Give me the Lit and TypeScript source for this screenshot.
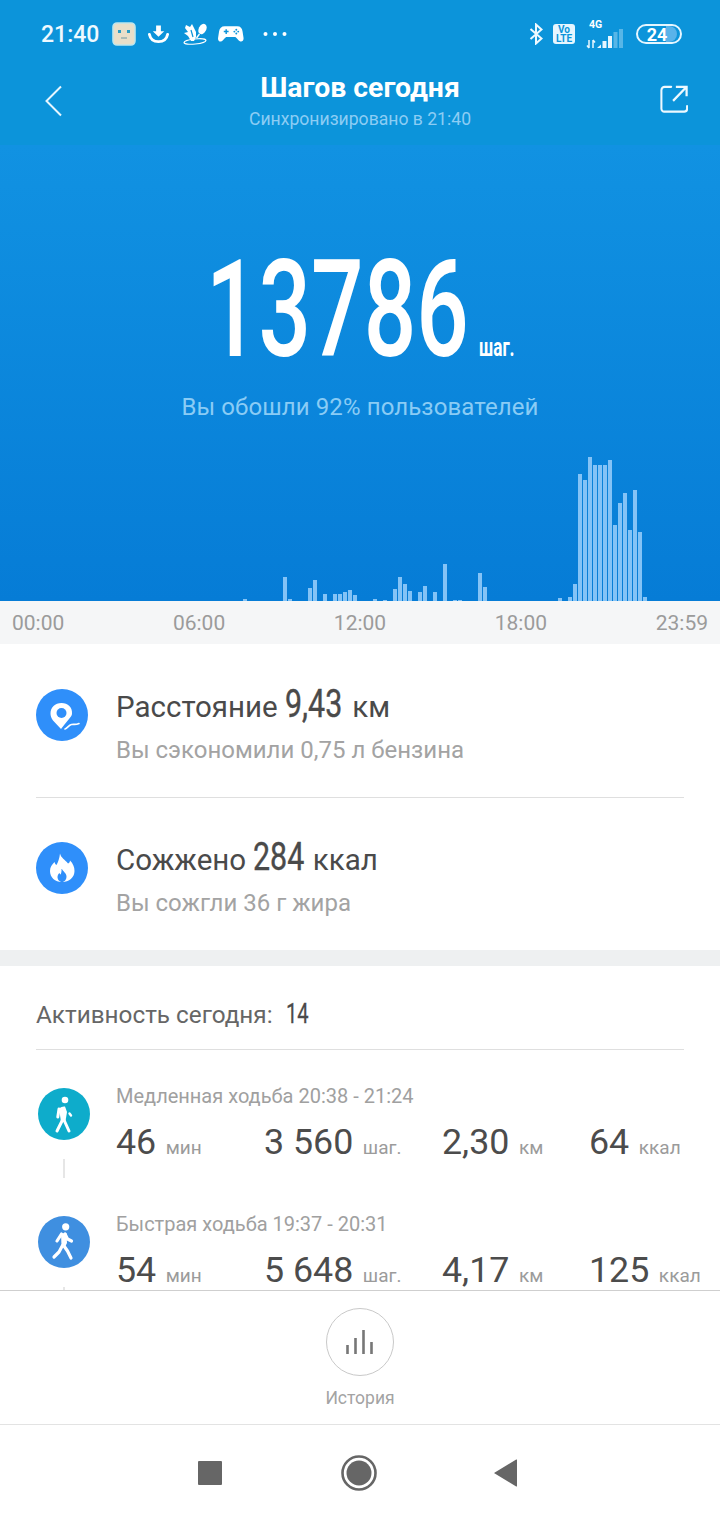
import { LitElement, css, html, svg } from "lit";
import { customElement } from "lit/decorators.js";

// Ten-minute step buckets starting at 00:00, keyed by slot index.
const STEP_SLOTS: Record<number, number> = {
  48: 2, 56: 24, 57: 2, 61: 13, 62: 21, 64: 7, 66: 7, 67: 7, 68: 9, 69: 11, 70: 6,
  74: 2, 76: 1, 78: 12, 79: 24, 80: 17, 81: 10, 83: 9, 84: 15, 86: 9, 88: 37,
  90: 1, 91: 1, 95: 28, 96: 14, 111: 3, 113: 4, 114: 17, 115: 127, 116: 121,
  117: 144, 118: 136, 119: 136, 120: 136, 121: 141, 122: 76, 123: 98, 124: 108,
  125: 71, 126: 111, 127: 69, 128: 4,
};

const AXIS = ["00:00", "06:00", "12:00", "18:00", "23:59"];

interface Stat {
  value: string;
  unit: string;
}

interface Activity {
  title: string;
  color: string;
  fast: boolean;
  stats: Stat[];
}

const ACTIVITIES: Activity[] = [
  {
    title: "Медленная ходьба 20:38 - 21:24",
    color: "#0eaccb",
    fast: false,
    stats: [
      { value: "46", unit: "мин" },
      { value: "3 560", unit: "шаг." },
      { value: "2,30", unit: "км" },
      { value: "64", unit: "ккал" },
    ],
  },
  {
    title: "Быстрая ходьба 19:37 - 20:31",
    color: "#3f8fe0",
    fast: true,
    stats: [
      { value: "54", unit: "мин" },
      { value: "5 648", unit: "шаг." },
      { value: "4,17", unit: "км" },
      { value: "125", unit: "ккал" },
    ],
  },
];

const slowWalker = svg`
  <circle cx="27" cy="12" r="3.300" fill="#fff" />
  <path d="M21 20.500Q24 18 27 18.500L29 24 27.500 33 23 34Z" fill="#fff" />
  <path d="M21 21 19.800 29" stroke="#fff" stroke-width="3" fill="none" stroke-linecap="round" />
  <path d="M31.500 25.500 33 27.500" stroke="#fff" stroke-width="2.400" fill="none" stroke-linecap="round" />
  <path d="M24.500 32 19 43M26 32 31 43" stroke="#fff" stroke-width="3" fill="none" stroke-linecap="round" />
`;

const fastWalker = svg`
  <circle cx="27.700" cy="10.800" r="3.600" fill="#fff" />
  <path d="M23.500 18 19 25M27 18 29.500 23 33.500 25" stroke="#fff" stroke-width="3.200" fill="none" stroke-linecap="round" stroke-linejoin="round" />
  <path d="M23 17.500 28.500 17 29 27 27 31 23.500 30Z" fill="#fff" />
  <path d="M24.500 29.500 21 36 16 41M26 30 29.500 35 33 42" stroke="#fff" stroke-width="3.200" fill="none" stroke-linecap="round" stroke-linejoin="round" />
`;

@customElement("app-root")
export class AppRoot extends LitElement {
  static styles = css`
    :host {
      display: block;
      width: 720px;
      height: 1520px;
      overflow: hidden;
      background: #fff;
      font-family: Roboto, "Noto Sans", sans-serif;
      color: #444;
    }
    svg {
      display: block;
      flex: none;
    }
    .page {
      display: flex;
      flex-direction: column;
      height: 1520px;
    }

    /* top bar */
    .top {
      height: 145px;
      flex: none;
      background: #0c94da;
      color: #fff;
    }
    .status {
      display: flex;
      align-items: center;
      height: 68px;
      padding: 0 38px 0 41px;
    }
    .time {
      font-size: 23px;
      font-weight: 500;
      width: 71px;
      color: #eef9ff;
    }
    .status-left {
      display: flex;
      align-items: center;
      gap: 12px;
    }
    .status-right {
      display: flex;
      align-items: center;
      margin-left: auto;
      gap: 9px;
    }
    .volte {
      display: flex;
      flex-direction: column;
      align-items: center;
      justify-content: center;
      width: 22px;
      height: 20px;
      border-radius: 3px;
      background: #e6f6ff;
      color: #0c94da;
      font-size: 10px;
      line-height: 9.500px;
      font-weight: 700;
    }
    .net {
      display: flex;
      flex-direction: column;
      align-items: center;
      margin-left: 1px;
      width: 40px;
    }
    .net b {
      font-size: 10.500px;
      line-height: 9px;
      margin-right: 19px;
    }
    .battery {
      display: flex;
      align-items: center;
      justify-content: center;
      position: relative;
      box-sizing: border-box;
      width: 46px;
      height: 20px;
      margin-left: 2px;
      border: 2px solid #e6f6ff;
      border-radius: 10px;
      font-size: 18px;
      font-weight: 700;
      overflow: hidden;
    }
    .battery i {
      position: absolute;
      top: 0;
      bottom: 0;
      right: 3px;
      width: 11px;
      border-radius: 0 8px 8px 0;
      background: #5ab3ea;
    }
    .battery span {
      position: relative;
      margin-right: 4px;
    }
    .title-row {
      display: flex;
      align-items: flex-start;
      justify-content: space-between;
      padding: 0 32px 0 45px;
    }
    .title-row > svg {
      margin-top: 17px;
    }
    .title {
      margin-left: -2px;
      text-align: center;
    }
    .title h1 {
      margin: 0;
      font-size: 28.400px;
      line-height: 40px;
      font-weight: 700;
    }
    .title p {
      margin: 0;
      font-size: 17.600px;
      line-height: 22px;
      color: #8ccdf4;
    }

    /* hero with the day chart */
    .hero {
      display: flex;
      flex-direction: column;
      height: 456px;
      flex: none;
      background: linear-gradient(#1192e2, #067cd6);
    }
    .count {
      display: flex;
      align-items: baseline;
      margin-top: 94px;
      padding-left: 206px;
      color: #fff;
      height: 142px;
    }
    .narrow {
      display: inline-block;
      overflow: visible;
      white-space: nowrap;
    }
    .narrow > span {
      display: inline-block;
      transform-origin: left center;
    }
    .count-value {
      width: 273px;
      font-size: 136px;
      line-height: 142px;
      font-weight: 500;
    }
    .count-value > span {
      transform: scaleX(0.68);
    }
    .count-unit {
      width: 36px;
      font-size: 26px;
      font-weight: 700;
    }
    .count-unit > span {
      transform: scaleX(0.66);
    }
    .rank {
      margin-top: 11px;
      text-align: center;
      font-size: 24px;
      line-height: 30px;
      color: #8accf5;
      letter-spacing: 0.100px;
    }
    .chart {
      display: flex;
      align-items: flex-end;
      margin-top: auto;
      padding-left: 3px;
      height: 146px;
    }
    .chart i {
      flex: none;
      width: 4px;
      margin-right: 1px;
      background: #84c3f6;
    }
    .axis {
      display: flex;
      align-items: center;
      justify-content: space-between;
      flex: none;
      height: 43px;
      padding: 0 12px;
      background: #f5f6f7;
      font-size: 21px;
      color: #9b9b9b;
    }

    /* daily summary */
    .summary {
      flex: none;
      padding: 0 36px;
    }
    .summary-row {
      display: flex;
      align-items: flex-start;
      gap: 28px;
      box-sizing: border-box;
      height: 153px;
      padding-top: 45px;
    }
    .summary-row + .summary-row {
      border-top: 1px solid #dfdfdf;
      padding-top: 44px;
    }
    .summary-text {
      margin-top: -5px;
    }
    .summary-text p {
      margin: 0;
    }
    .headline {
      display: flex;
      align-items: baseline;
      font-size: 29.500px;
      line-height: 40px;
      color: #4a4a4a;
      height: 40px;
    }
    .headline .narrow {
      width: 60px;
      font-size: 38px;
      -webkit-text-stroke: 0.400px #4a4a4a;
    }
    .headline .narrow > span {
      transform: scaleX(0.8);
    }
    .headline .narrow.short {
      width: 52px;
    }
    .summary-text .hint {
      font-size: 24px;
      line-height: 30px;
      margin-top: 11px;
      color: #a3a3a3;
    }
    .band {
      flex: none;
      height: 16px;
      background: #eef0f1;
    }

    /* activity list, cut off by the history bar */
    .activity {
      flex: none;
      height: 324px;
      overflow: hidden;
      padding: 0 36px;
    }
    .activity-head {
      display: flex;
      align-items: baseline;
      box-sizing: border-box;
      height: 84px;
      padding-top: 30px;
      border-bottom: 1px solid #dfdfdf;
      font-size: 24.300px;
      line-height: 36px;
      color: #666;
    }
    .activity-head .narrow {
      margin-left: 13px;
      font-size: 28px;
      color: #4a4a4a;
      -webkit-text-stroke: 0.300px #4a4a4a;
    }
    .activity-head .narrow > span {
      transform: scaleX(0.72);
    }
    .session {
      display: flex;
      height: 128px;
    }
    .session-rail {
      display: flex;
      flex-direction: column;
      align-items: center;
      flex: none;
      width: 56px;
      margin-right: 24px;
      padding-top: 38px;
    }
    .session-rail i {
      width: 2px;
      height: 37px;
      margin-top: 19px;
      background: #e6e6e6;
    }
    .session-title {
      margin: 33px 0 0;
      font-size: 20px;
      line-height: 26px;
      color: #a0a0a0;
    }
    .stats {
      display: grid;
      grid-template-columns: 148px 178px 147px 1fr;
      margin-top: 11px;
      width: 600px;
    }
    .stat {
      display: flex;
      align-items: baseline;
      gap: 9.500px;
      white-space: nowrap;
    }
    .stat b {
      font-size: 35.800px;
      line-height: 44px;
      font-weight: 400;
      color: #4c4c4c;
    }
    .stat span {
      font-size: 19px;
      color: #9b9b9b;
    }

    /* history button */
    .history {
      display: flex;
      flex-direction: column;
      align-items: center;
      flex: none;
      box-sizing: border-box;
      height: 135px;
      padding-top: 17px;
      border-top: 1px solid #cfcfcf;
      border-bottom: 1px solid #e3e3e3;
      background: #fff;
    }
    .history-btn {
      display: flex;
      align-items: center;
      justify-content: center;
      box-sizing: border-box;
      width: 68px;
      height: 68px;
      border: 1px solid #c9c9c9;
      border-radius: 50%;
    }
    .history-label {
      margin-top: 10px;
      font-size: 17.500px;
      line-height: 24px;
      color: #a3a3a3;
    }

    /* system navigation */
    .nav {
      display: flex;
      align-items: center;
      gap: 119px;
      flex: 1;
      padding-left: 198px;
    }
    .nav-square {
      width: 24px;
      height: 24px;
      border-radius: 1px;
      background: #666;
    }
    .nav-back {
      margin-left: -2px;
    }
  `;

  private renderStatusBar() {
    return html`
      <div class="status">
        <span class="time">21:40</span>
        <div class="status-left">
          <svg width="24" height="24" viewBox="0 0 24 24">
            <rect x="1" y="1" width="22" height="22" rx="4" fill="#e9dfc9" stroke="#bfe6ec" stroke-width="1.600" />
            <rect x="6" y="8" width="3" height="3" fill="#2a9cc4" />
            <rect x="15" y="8" width="3" height="3" fill="#2a9cc4" />
            <rect x="9" y="15.500" width="6" height="1" fill="#6d9aa6" />
          </svg>
          <svg width="21" height="20" viewBox="0 0 22 20">
            <path d="M8.500 1h5v6h3.500l-6 6-6-6h3.500z" fill="#fff" />
            <path d="M1.500 10.500c1 5 5 7.500 9.500 7.500s8.500-2.500 9.500-7.500" fill="none" stroke="#fff" stroke-width="3" stroke-linecap="round" />
          </svg>
          <svg width="25" height="22" viewBox="0 0 25 22" style="margin-left:2px">
            <path d="M3 2 7 4 9 1 11 5 13 9 13 14 11 18 8 18 5 13 1 10 5 9 2 5Z" fill="#fff" />
            <path d="M8 7 10 14" stroke="#0c94da" stroke-width="1.200" />
            <ellipse cx="19.500" cy="6" rx="3.700" ry="5.500" transform="rotate(28 19.500 6)" fill="#fff" />
            <path d="M16.500 11 13.500 15" stroke="#fff" stroke-width="1.400" />
            <ellipse cx="12" cy="18.500" rx="11" ry="2.500" transform="rotate(-6 12 18.500)" fill="none" stroke="#fff" stroke-width="1.200" />
          </svg>
          <svg width="26" height="18" viewBox="0 0 27 18" style="margin-left:-2px">
            <path d="M7 1h13c3.500 0 5 2 5.500 5.500l1 6.500c.4 3-1.800 4.500-3.800 3.500-1.500-.7-3-3.500-4.700-4.500H8.500c-1.700 1-3.200 3.800-4.700 4.500C1.800 17.500-.4 16 .1 13l1-6.500C1.600 3 3.500 1 7 1z" fill="#fff" />
            <path d="M6 6.500h5M8.500 4v5" stroke="#0c94da" stroke-width="1.500" />
            <circle cx="19" cy="4.500" r="1" fill="#0c94da" />
            <circle cx="19" cy="8.500" r="1" fill="#0c94da" />
            <circle cx="17" cy="6.500" r="1" fill="#0c94da" />
            <circle cx="21" cy="6.500" r="1" fill="#0c94da" />
          </svg>
          <svg width="24" height="6" viewBox="0 0 24 6" style="margin-left:7px">
            <circle cx="2.500" cy="3" r="2" fill="#fff" />
            <circle cx="12" cy="3" r="2" fill="#fff" />
            <circle cx="21.500" cy="3" r="2" fill="#fff" />
          </svg>
        </div>
        <div class="status-right">
          <svg width="15" height="22" viewBox="0 0 15 22">
            <path d="M1.500 6l11 9.500L7 20.500V1.500l5.500 5L1.500 16" fill="none" stroke="#eef9ff" stroke-width="2" />
          </svg>
          <div class="volte"><span>Vo</span><span>LTE</span></div>
          <div class="net">
            <b>4G</b>
            <svg width="38" height="20" viewBox="0 0 38 20">
              <path d="M3 11v8M1 16.500 3 19M7 19v-8M7 11 9 13.500" fill="none" stroke="#e6f6ff" stroke-width="1.500" />
              <path d="M11 19 15 15.500V19Z" fill="#e6f6ff" />
              <rect x="16.500" y="12" width="4" height="7" fill="#e6f6ff" />
              <rect x="22" y="7" width="4" height="12" fill="#e6f6ff" />
              <rect x="27.500" y="3" width="4" height="16" fill="#e6f6ff" opacity="0.350" />
              <rect x="33" y="0" width="4" height="19" fill="#e6f6ff" opacity="0.350" />
            </svg>
          </div>
          <div class="battery"><i></i><span>24</span></div>
        </div>
      </div>
    `;
  }

  private renderTitle() {
    return html`
      <div class="title-row">
        <svg width="17" height="32" viewBox="0 0 17 32">
          <path d="M16 1.500 1.500 16 16 30.500" fill="none" stroke="#e6f6ff" stroke-width="2" />
        </svg>
        <div class="title">
          <h1>Шагов сегодня</h1>
          <p>Синхронизировано в 21:40</p>
        </div>
        <svg width="28" height="28" viewBox="0 0 30 30">
          <path d="M12 2H5a3.500 3.500 0 0 0-3.500 3.500v20A3 3 0 0 0 5 28.500h21a3 3 0 0 0 3-3v-3" fill="none" stroke="#eef9ff" stroke-width="2.200" stroke-linecap="round" />
          <path d="M14 17 27.500 3M17 2h11.500v10" fill="none" stroke="#eef9ff" stroke-width="2.400" />
        </svg>
      </div>
    `;
  }

  private renderChart() {
    const slots = Array.from({ length: 144 }, (_, i) => STEP_SLOTS[i] ?? 0);
    return html`
      <div class="chart">
        ${slots.map((h) => html`<i style="height:${h}px"></i>`)}
      </div>
    `;
  }

  private renderActivity(item: Activity) {
    return html`
      <div class="session">
        <div class="session-rail">
          <svg width="52" height="52" viewBox="0 0 52 52">
            <circle cx="26" cy="26" r="26" fill=${item.color} />
            ${item.fast ? fastWalker : slowWalker}
          </svg>
          <i></i>
        </div>
        <div>
          <p class="session-title">${item.title}</p>
          <div class="stats">
            ${item.stats.map(
              (s) => html`<div class="stat"><b>${s.value}</b><span>${s.unit}</span></div>`,
            )}
          </div>
        </div>
      </div>
    `;
  }

  render() {
    return html`
      <div class="page">
        <div class="top">${this.renderStatusBar()} ${this.renderTitle()}</div>

        <div class="hero">
          <div class="count">
            <span class="narrow count-value"><span>13786</span></span>
            <span class="narrow count-unit"><span>шаг.</span></span>
          </div>
          <div class="rank">Вы обошли 92% пользователей</div>
          ${this.renderChart()}
        </div>
        <div class="axis">${AXIS.map((t) => html`<span>${t}</span>`)}</div>

        <div class="summary">
          <div class="summary-row">
            <svg width="52" height="52" viewBox="0 0 52 52">
              <circle cx="26" cy="26" r="26" fill="#2f8ffa" />
              <path d="M25.500 14C19 14 14.500 18.500 14.500 24.500c0 2.500.8 4.500 2.500 7L25 40l3.500-4.500 4.500-5.500c1.700-2 3-3.500 3-5.500C36.500 18.500 32 14 25.500 14z" fill="#fff" />
              <circle cx="25.500" cy="24" r="5" fill="#2f8ffa" />
              <path d="M28.500 40.500c3-.5 3.500-4.500 7-5 3-.4 4 .5 8-1" fill="none" stroke="#2f8ffa" stroke-width="4.500" />
              <path d="M29 40c2.500-.5 3.500-4 6.500-4.500 3-.4 4 .5 7.500-1" fill="none" stroke="#fff" stroke-width="1.600" stroke-linecap="round" />
            </svg>
            <div class="summary-text">
              <p class="headline">
                Расстояние&nbsp;
                <span class="narrow"><span>9,43</span></span>
                &nbsp;км
              </p>
              <p class="hint">Вы сэкономили 0,75 л бензина</p>
            </div>
          </div>
          <div class="summary-row">
            <svg width="52" height="52" viewBox="0 0 52 52">
              <circle cx="26" cy="26" r="26" fill="#2f8ffa" />
              <path d="M24 11.500c1 4.500 5 6 8 10 1.500-.5 2-2 2-3 3 3 4.500 6.500 4.500 10.500C38.500 35.500 33 40 26 40s-12-4.500-12-11c0-4 2-6.500 4.500-9 .5 1.500 1 2.500 2 3 1.500-3 3-6.500 3.500-11.500z" fill="#fff" />
              <path d="M26 27c1 2.500 4.500 4 4.500 7.500 0 3-2 5.500-4.500 5.500s-4.500-2.500-4.500-5c0-1.500.8-3 2-4 .3.800.6 1.300 1.200 1.500.6-1.500 1-3.500.8-5.500z" fill="#2f8ffa" />
            </svg>
            <div class="summary-text">
              <p class="headline">
                Сожжено&nbsp;
                <span class="narrow short"><span>284</span></span>
                &nbsp;ккал
              </p>
              <p class="hint">Вы сожгли 36 г жира</p>
            </div>
          </div>
        </div>
        <div class="band"></div>

        <div class="activity">
          <div class="activity-head">
            Активность сегодня:
            <span class="narrow"><span>14</span></span>
          </div>
          ${ACTIVITIES.map((a) => this.renderActivity(a))}
        </div>

        <div class="history">
          <div class="history-btn">
            <svg width="28" height="26" viewBox="0 0 28 26">
              <path d="M1.500 25v-9M9.500 25V9M17.500 25V1M25.500 25V13" stroke="#777" stroke-width="2.600" fill="none" />
            </svg>
          </div>
          <span class="history-label">История</span>
        </div>

        <div class="nav">
          <div class="nav-square"></div>
          <svg width="36" height="36" viewBox="0 0 36 36">
            <circle cx="18" cy="18" r="16.500" fill="none" stroke="#666" stroke-width="2.600" />
            <circle cx="18" cy="18" r="12.500" fill="#666" />
          </svg>
          <svg class="nav-back" width="24" height="28" viewBox="0 0 24 28">
            <path d="M23 1v26a.5.5 0 0 1-.8.4L.8 14.500a.5.5 0 0 1 0-1L22.200.6A.5.5 0 0 1 23 1z" fill="#666" />
          </svg>
        </div>
      </div>
    `;
  }
}
